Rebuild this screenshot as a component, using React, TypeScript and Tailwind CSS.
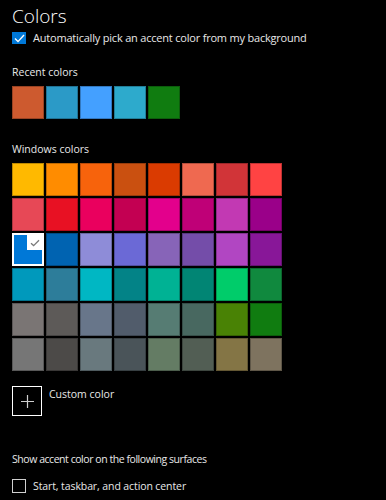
import React from "react";

const recent = ["#cd5a2f", "#2b9ac7", "#44a0ff", "#2daacc", "#107c10"];

const windows = [
  ["#ffb900", "#ff8c00", "#f7630c", "#ca5010", "#da3b01", "#ef6950", "#d13438", "#ff4343"],
  ["#e74856", "#e81123", "#ea005e", "#c30052", "#e3008c", "#bf0077", "#c239b3", "#9a0089"],
  ["#0078d7", "#0063b1", "#8e8cd8", "#6b69d6", "#8764b8", "#744da9", "#b146c2", "#881798"],
  ["#0099bc", "#2d7d9a", "#00b7c3", "#038387", "#00b294", "#018574", "#00cc6a", "#10893e"],
  ["#7a7574", "#5d5a58", "#68768a", "#515c6b", "#567c73", "#486860", "#498205", "#107c10"],
  ["#767676", "#4c4a48", "#69797e", "#4a5459", "#647c64", "#525e54", "#847545", "#7e735f"],
];

function Swatch({ color, selected }: { color: string; selected?: boolean }) {
  if (selected) {
    return (
      <div className="relative w-[32px] h-[33px] border-2 border-white" style={{ backgroundColor: color }}>
        <div className="absolute right-0 top-0 w-[15px] h-[15px] bg-white flex items-center justify-center">
          <svg width="10" height="8" viewBox="0 0 10 8">
            <path d="M1 4.2 L3.6 6.6 L9 1.2" fill="none" stroke="#7a7a7a" strokeWidth="1.3" />
          </svg>
        </div>
      </div>
    );
  }
  return <div className="w-[32px] h-[33px] border border-black/25" style={{ backgroundColor: color }} />;
}

export default function App() {
  return (
    <div
      className="w-[386px] h-[500px] bg-black text-[#e8e8e8] overflow-hidden pl-[12px]"
      style={{ fontFamily: '"Open Sans", "Noto Sans", sans-serif' }}
    >
      <div className="pt-[4px] text-[19px] leading-[24px] font-light text-white">Colors</div>
      <div className="flex items-center h-[20px] gap-[7px]">
        <div className="w-[14px] h-[12px] bg-[#0078d7] flex items-center justify-center">
          <svg width="11" height="9" viewBox="0 0 11 9">
            <path d="M1 4.6 L4 7.6 L10 1" fill="none" stroke="white" strokeWidth="1.4" />
          </svg>
        </div>
        <span className="text-[11px] leading-[20px] tracking-[-0.2px]">
          Automatically pick an accent color from my background
        </span>
      </div>

      <div className="mt-[14px] text-[10.5px] leading-[20px]">Recent colors</div>
      <div className="mt-[4px] flex gap-[2px]">
        {recent.map((c, i) => (
          <Swatch key={i} color={c} />
        ))}
      </div>

      <div className="mt-[20px] text-[10.5px] leading-[20px]">Windows colors</div>
      <div className="mt-[4px] flex flex-col gap-[2px]">
        {windows.map((row, r) => (
          <div key={r} className="flex gap-[2px]">
            {row.map((c, i) => (
              <Swatch key={i} color={c} selected={r === 2 && i === 0} />
            ))}
          </div>
        ))}
      </div>

      <div className="mt-[15px] flex items-start gap-[7px]">
        <div className="w-[30px] h-[30px] border-[1.5px] border-white flex items-center justify-center">
          <svg width="13" height="13" viewBox="0 0 13 13">
            <path d="M6.5 0 V13 M0 6.5 H13" stroke="#cfcfcf" strokeWidth="1.2" />
          </svg>
        </div>
        <span className="mt-[-2px] text-[10.5px] leading-[20px]">Custom color</span>
      </div>

      <div className="mt-[33px] text-[10.5px] leading-[20px] tracking-[-0.45px]">
        Show accent color on the following surfaces
      </div>
      <div className="mt-[7px] flex items-center h-[20px] gap-[7px]">
        <div className="w-[14px] h-[14px] border-[1.5px] border-[#d0d0d0]" />
        <span className="text-[10.5px] leading-[20px] tracking-[-0.1px]">Start, taskbar, and action center</span>
      </div>
    </div>
  );
}
